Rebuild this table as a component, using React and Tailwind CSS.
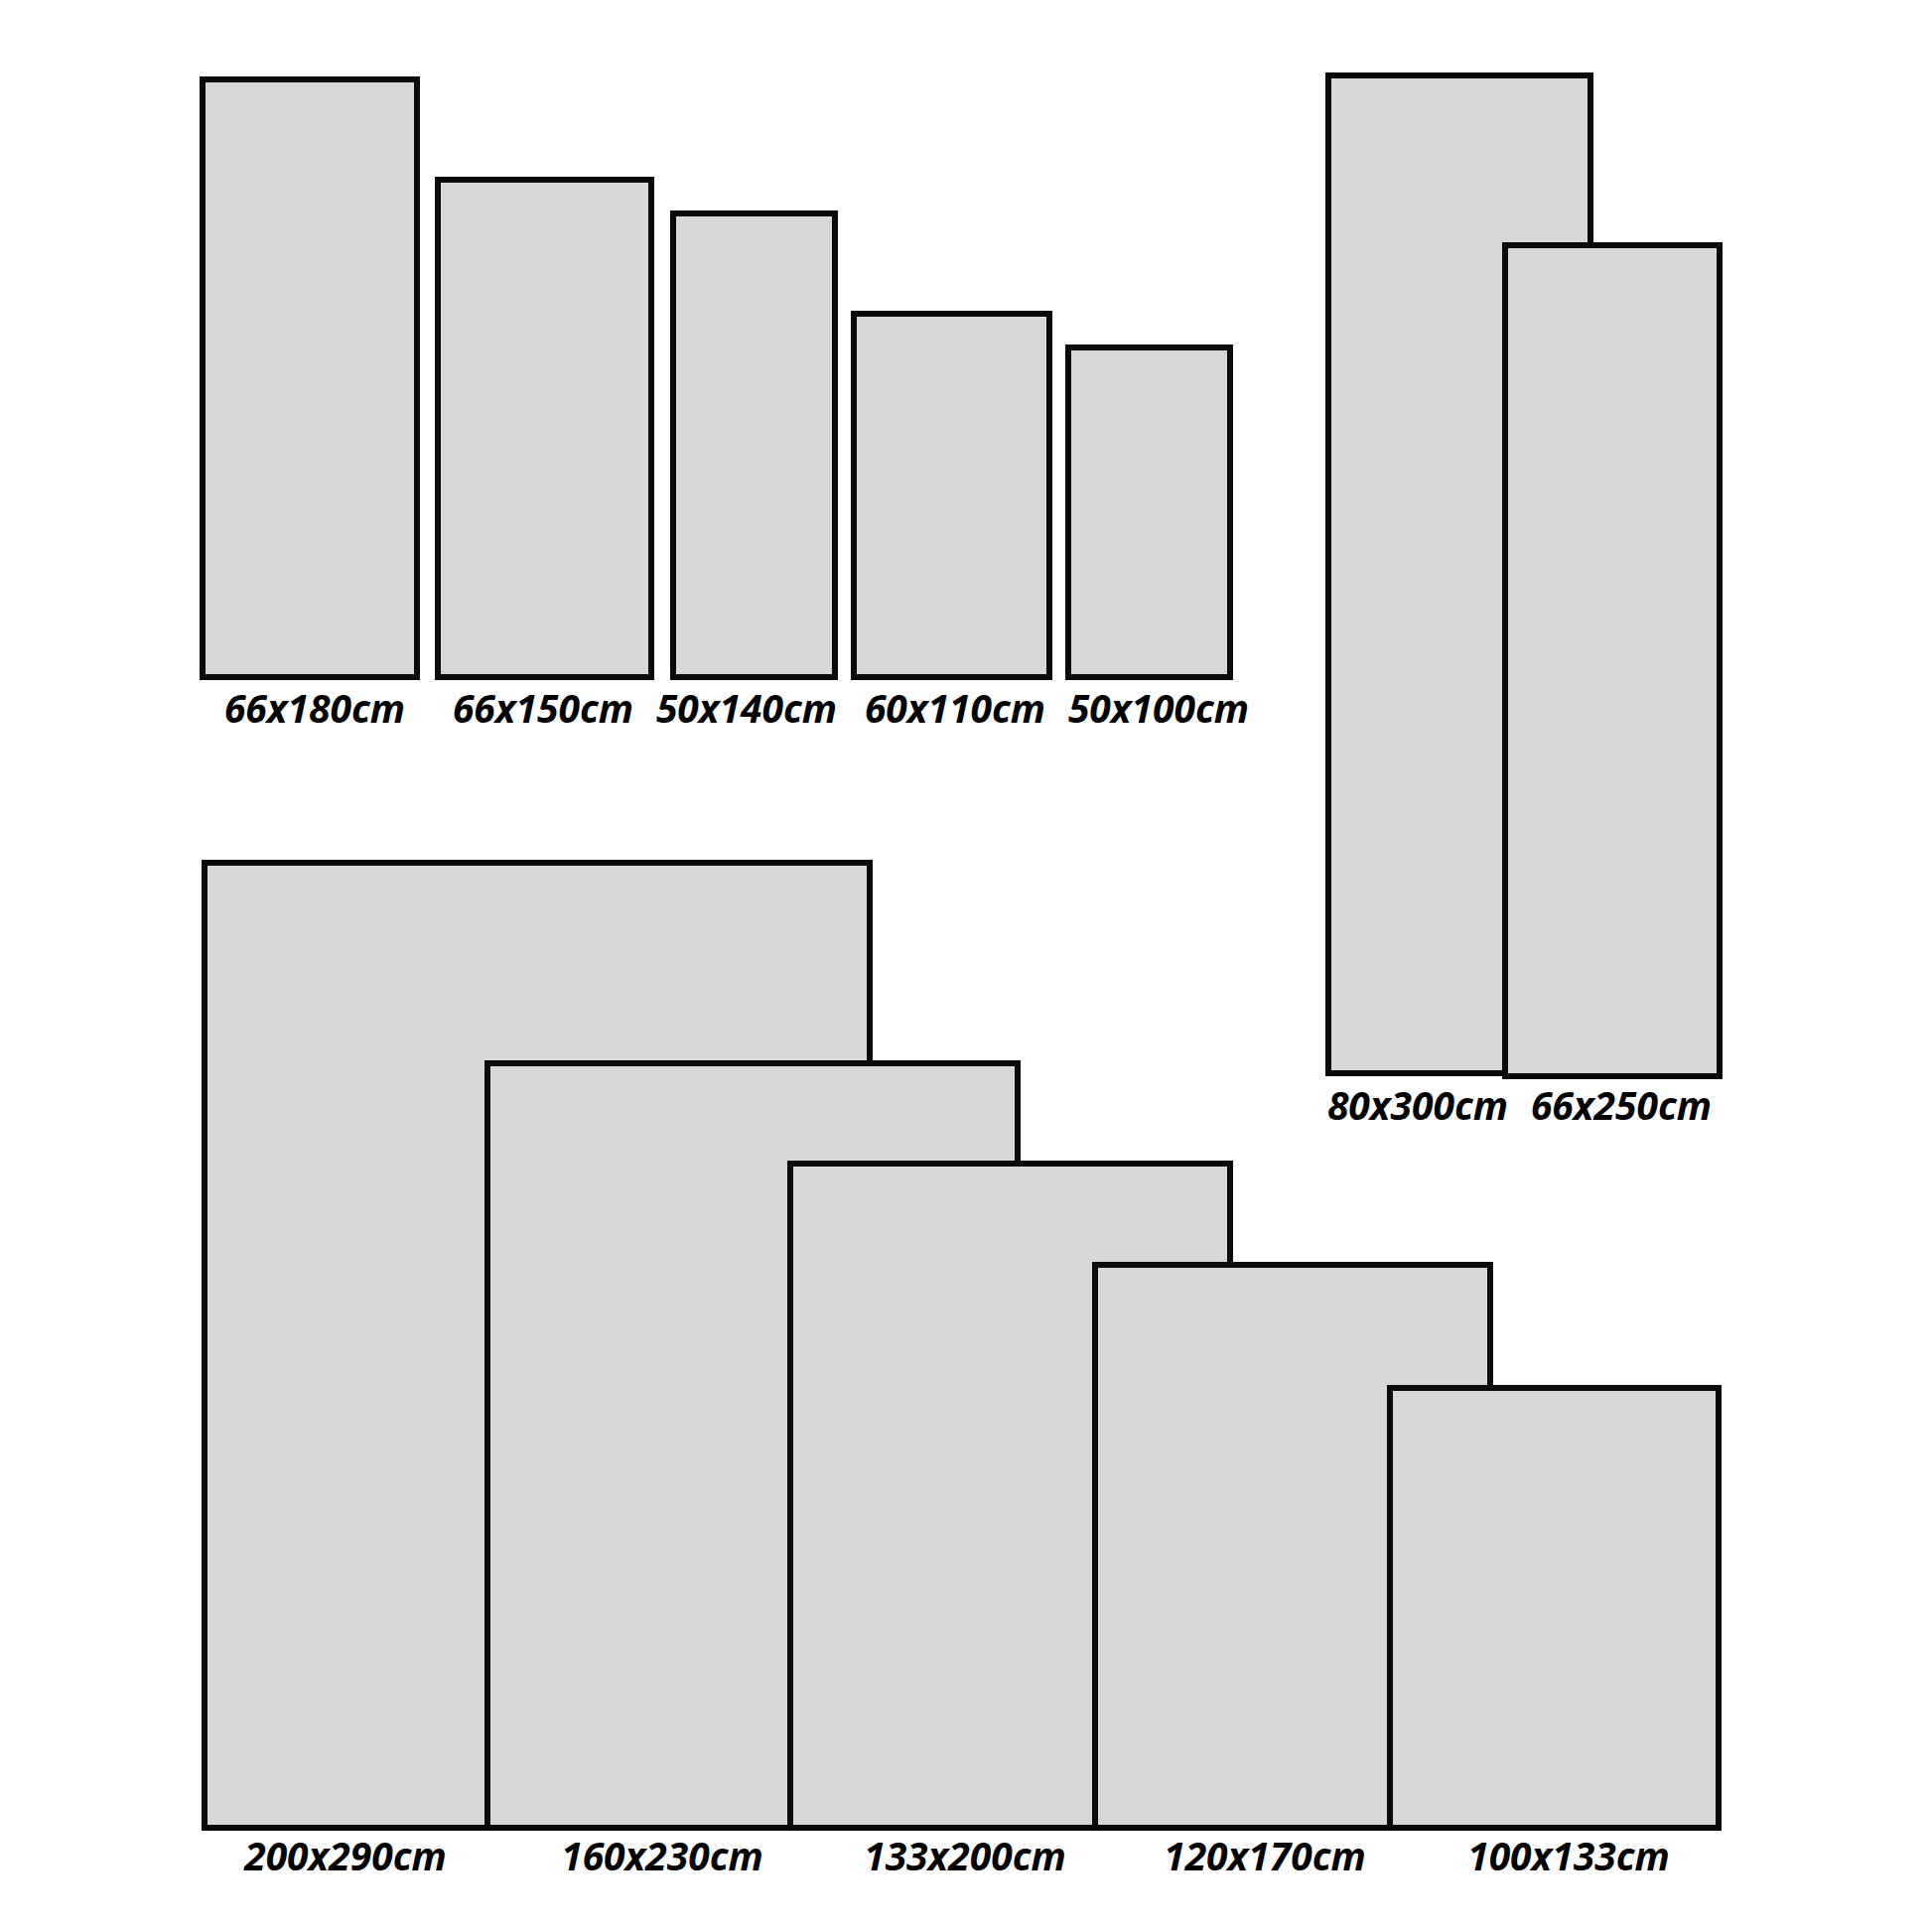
import React from "react";

// outer boxes of each rug, in page pixels; later entries sit on top
const RUGS = [
  // top row
  "left-[201px] top-[77px] w-[222px] h-[608px]",
  "left-[438px] top-[178px] w-[221px] h-[507px]",
  "left-[675px] top-[212px] w-[169px] h-[473px]",
  "left-[857px] top-[313px] w-[203px] h-[372px]",
  "left-[1073px] top-[347px] w-[169px] h-[338px]",
  // runners
  "left-[1335px] top-[73px] w-[270px] h-[1011px]",
  "left-[1513px] top-[244px] w-[222px] h-[843px]",
  // big rugs
  "left-[203px] top-[866px] w-[676px] h-[978px]",
  "left-[488px] top-[1068px] w-[540px] h-[776px]",
  "left-[793px] top-[1169px] w-[449px] h-[675px]",
  "left-[1100px] top-[1271px] w-[404px] h-[573px]",
  "left-[1397px] top-[1395px] w-[337px] h-[449px]",
];

const LABELS = [
  { text: "66x180cm", pos: "left-[317px] top-[693px]" },
  { text: "66x150cm", pos: "left-[547px] top-[693px]" },
  { text: "50x140cm", pos: "left-[752px] top-[693px]" },
  { text: "60x110cm", pos: "left-[962px] top-[693px]" },
  { text: "50x100cm", pos: "left-[1167px] top-[693px]" },
  { text: "80x300cm", pos: "left-[1428px] top-[1093px]" },
  { text: "66x250cm", pos: "left-[1633px] top-[1093px]" },
  { text: "200x290cm", pos: "left-[348px] top-[1849px]" },
  { text: "160x230cm", pos: "left-[667px] top-[1849px]" },
  { text: "133x200cm", pos: "left-[972px] top-[1849px]" },
  { text: "120x170cm", pos: "left-[1274px] top-[1849px]" },
  { text: "100x133cm", pos: "left-[1580px] top-[1849px]" },
];

const App = () => {
  return (
    <div className="relative w-[1946px] h-[1946px] bg-white overflow-hidden">
      {RUGS.map((r, i) => (
        <div key={i} className={`absolute ${r} bg-[#d9d7d8] border-[6px] border-[#0a0a0a]`} />
      ))}
      {LABELS.map((l) => (
        <div key={l.text}
          className={`absolute ${l.pos} -translate-x-1/2 whitespace-nowrap font-['Open_Sans',sans-serif] italic font-bold text-[39px] leading-none text-black`}>
          {l.text}
        </div>
      ))}
    </div>
  );
};

export default App;
